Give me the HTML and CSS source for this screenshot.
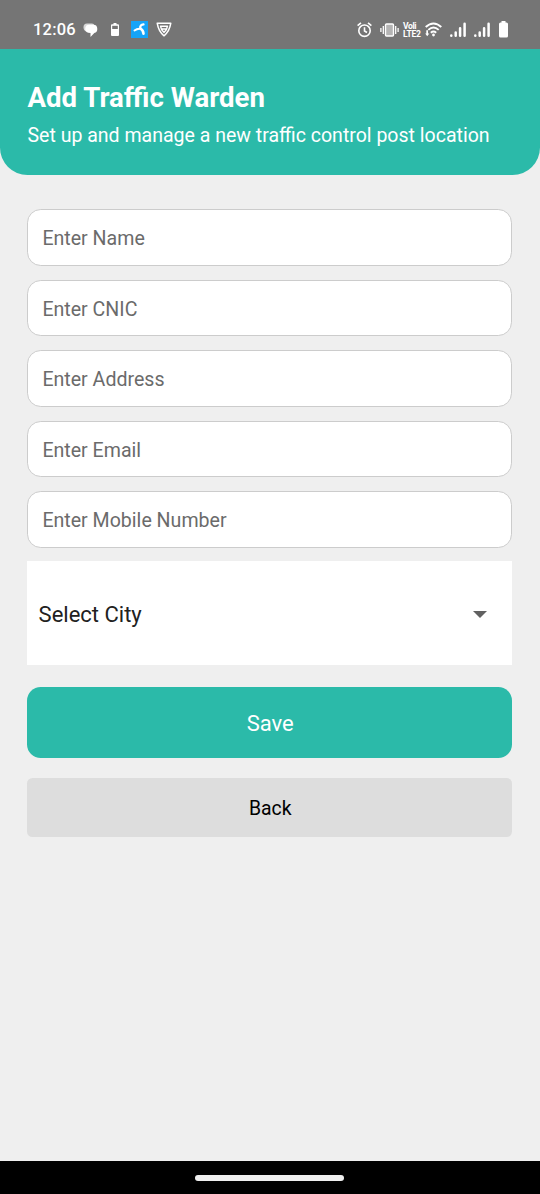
FILE: index.html
```html
<!DOCTYPE html>
<html lang="en">
<head>
<meta charset="utf-8">
<title>Add Traffic Warden</title>
<link rel="stylesheet" href="styles.css">
</head>
<body>
<div class="status-bar">
  <div class="status-left">
    <span class="clock">12:06</span>
    <svg class="icon-chat" width="15" height="16" viewBox="0 0 15 16"><path fill="#d8d8d8" d="M4 1.500H9Q11 1.500 11.500 3.500L3 8.500V9.500Q0.500 8.500 0.500 6V5Q.5 1.500 4 1.500Z"/><path fill="#fff" d="M6 2.700H10.500Q14.300 2.700 14.300 7Q14.300 10.500 11.300 11L7.500 15V11Q2.200 11 2.200 7Q2.200 2.700 6 2.700Z"/></svg>
    <svg class="icon-lowbat" width="8" height="14" viewBox="0 0 8 14"><path fill="#fff" d="M2.500 0h3v1.300H7q1 0 1 1V12q0 1-1 1H1q-1 0-1-1V2.300q0-1 1-1h1.500Z"/><path fill="#757575" d="M1.200 2.800h5.600v3.200H1.200Z"/></svg>
    <svg class="icon-app" width="17" height="17" viewBox="0 0 17 17"><path fill="#16a4f8" d="M0 0h17v17H0Z"/><g fill="none" stroke="#fff" stroke-linecap="round"><path stroke-width="2.300" d="M9.300 7.300C8.800 5 10.300 3.700 12.500 3.400"/><path stroke-width="2" d="M9 7.700C6.500 7.500 5 8.300 3.500 9.500"/><path stroke-width="2.600" d="M9.800 7.800C11.500 8.700 12.300 10.500 12.500 12.600"/></g></svg>
    <svg class="icon-shield" width="16" height="15" viewBox="0 0 16 15"><g fill="none" stroke="#fff" stroke-linejoin="round"><path stroke-width="1.500" d="M1.200 1.200H14.800Q13.500 9.500 8 13.800Q2.500 9.500 1.200 1.200Z"/><path stroke-width="1.400" d="M4.500 4.200H11.500Q11 8 8 10.500Q5 8 4.500 4.200ZM6 7H10"/></g></svg>
  </div>
  <div class="status-right">
    <svg class="icon-alarm" width="15" height="16" viewBox="0 0 15 16"><g fill="none" stroke="#fff" stroke-width="1.600"><circle cx="7.500" cy="8.700" r="5.700"/><path d="M.6 3.700L4 .8M14.400 3.700L11 .8M7.500 5.200V9L10 10.500"/></g></svg>
    <svg class="icon-vibrate" width="19" height="14" viewBox="0 0 19 14"><rect x="5.500" y="1" width="8" height="12" rx="1" fill="#b4b4b4" stroke="#fff" stroke-width="1.400"/><path fill="none" stroke="#fff" stroke-width="1.300" d="M3.300 3V11M.9 5V9M15.700 3V11M18.100 5V9"/></svg>
    <div class="volte"><span class="vo">Voli</span><span class="lte">LTE2</span></div>
    <svg class="icon-wifi" width="17" height="15" viewBox="0 0 17 15"><g fill="none" stroke="#fff" stroke-width="1.900"><path d="M.7 5Q8.500-2.200 16.300 5M3.300 7.900Q8.500 3.200 13.700 7.900M5.800 10.700Q8.500 8.400 11.200 10.700"/></g><circle cx="8.500" cy="13" r="1.400" fill="#fff"/><path fill="#fff" d="M1.300 8.200h1.700v3.300h1.300L2.200 14.200L.2 11.500h1.100Z"/></svg>
    <svg class="icon-signal" width="16" height="16" viewBox="0 0 16 16"><path fill="none" stroke="#fff" stroke-width="2.500" stroke-linecap="round" d="M1.300 13.500V13.700M5.700 10.500V13.700M10.100 6.300V13.700M14.600 1.700V13.700"/></svg>
    <svg class="icon-signal" width="16" height="16" viewBox="0 0 16 16"><path fill="none" stroke="#fff" stroke-width="2.500" stroke-linecap="round" d="M1.300 13.500V13.700M5.700 10.500V13.700M10.100 6.300V13.700M14.600 1.700V13.700"/></svg>
    <svg class="icon-battery" width="9" height="17" viewBox="0 0 9 17"><path fill="#fff" d="M2.500 0h4v1.500H7.500Q9 1.500 9 3V15q0 1.500-1.500 1.500H1.500Q0 16.500 0 15V3Q0 1.500 1.500 1.500h1Z"/></svg>
  </div>
</div>
<header class="header">
  <h1 class="title">Add Traffic Warden</h1>
  <p class="subtitle">Set up and manage a new traffic control post location</p>
</header>
<main class="form">
  <input class="field" type="text" placeholder="Enter Name">
  <input class="field" type="text" placeholder="Enter CNIC">
  <input class="field" type="text" placeholder="Enter Address">
  <input class="field" type="text" placeholder="Enter Email">
  <input class="field" type="text" placeholder="Enter Mobile Number">
  <div class="picker"><span>Select City</span><svg width="14" height="7" viewBox="0 0 14 7"><path fill="#616161" d="M0 0h14L7 7Z"/></svg></div>
  <button class="save">Save</button>
  <button class="back">Back</button>
</main>
<footer class="nav-bar"><div class="nav-handle"></div></footer>
</body>
</html>
```
FILE: styles.css
```css
* { box-sizing: border-box; }
body {
  margin: 0;
  height: 1194px;
  display: flex;
  flex-direction: column;
  background: #efefef;
  font-family: Roboto, sans-serif;
  overflow: hidden;
}
svg { display: block; flex: none; }
.status-bar {
  height: 49.4px;
  padding: 9px 32px 0 33px;
  display: flex;
  justify-content: space-between;
  background: #757575;
  color: #fff;
}
.status-left, .status-right { display: flex; align-items: center; height: 41px; }
.clock { width: 50px; font-size: 16.5px; font-weight: 500; letter-spacing: 0.2px; }
.icon-chat { margin-right: 13px; }
.icon-lowbat { margin-right: 12px; }
.icon-app { margin-right: 8px; }
.icon-alarm { margin-right: 8px; }
.icon-vibrate { margin-right: 4px; }
.volte {
  width: 18px;
  margin-right: 4px;
  display: flex;
  flex-direction: column;
  font-size: 8.6px;
  font-weight: 700;
  line-height: 8px;
  white-space: nowrap;
}
.vo { letter-spacing: -0.4px; }
.lte { letter-spacing: -0.3px; }
.icon-wifi { margin-right: 8px; }
.icon-signal { margin-right: 8px; }
.icon-battery { margin-left: 1px; }
.header {
  height: 125.6px;
  padding: 32.6px 27.5px 0;
  background: #2bbaa9;
  color: #fff;
  border-radius: 0 0 27.5px 27.5px;
}
.title { margin: 0; font-size: 27.6px; line-height: 31px; font-weight: 700; }
.subtitle { margin: 11px 0 0; font-size: 19.53px; line-height: 24px; white-space: nowrap; }
.form {
  flex: 1;
  padding: 34.3px 28px 0 27.4px;
  display: flex;
  flex-direction: column;
}
.field {
  height: 56.7px;
  margin: 0 0 13.8px;
  padding: 2.3px 14px 0;
  border: 1px solid #ccc;
  border-radius: 13.75px;
  background: #fff;
  font: 400 19.58px Roboto, sans-serif;
}
.field::placeholder { color: #6b6b6b; opacity: 1; }
.picker {
  height: 104px;
  margin-top: -0.5px;
  padding: 2px 25.5px 0 11.2px;
  display: flex;
  align-items: center;
  justify-content: space-between;
  background: #fff;
  color: #212121;
  font-size: 22px;
}
.save, .back {
  padding: 2px 0 0 1px;
  border: 0;
  font-family: Roboto, sans-serif;
}
.save {
  height: 71px;
  margin-top: 21.3px;
  padding-top: 3px;
  border-radius: 13.75px;
  background: #2bbaa9;
  color: #fff;
  font-size: 22px;
}
.back {
  height: 59px;
  margin-top: 20.3px;
  border-radius: 5.5px;
  background: #ddd;
  color: #000;
  font-size: 19.4px;
}
.nav-bar {
  height: 33px;
  display: flex;
  align-items: center;
  justify-content: center;
  background: #000;
}
.nav-handle { width: 149px; height: 6px; margin-right: 1px; border-radius: 3px; background: #efefef; }
```
